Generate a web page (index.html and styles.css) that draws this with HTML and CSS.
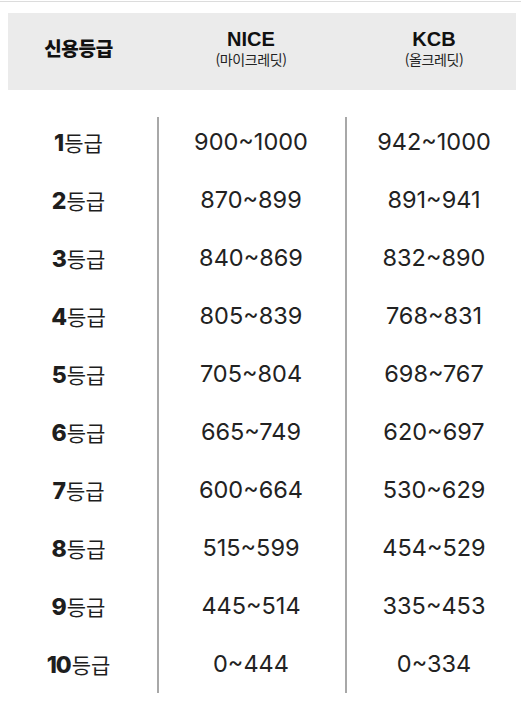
FILE: index.html
```html
<!DOCTYPE html>
<html lang="ko">
<head>
<meta charset="utf-8">
<title>신용등급표</title>
<link rel="stylesheet" href="styles.css">
</head>
<body>
<div class="topline"></div>
<div class="table">
  <div class="thead">
    <div class="th"><span class="th-ko">신용등급</span></div>
    <div class="th"><span class="th-en">NICE</span><span class="th-sub">(마이크레딧)</span></div>
    <div class="th"><span class="th-en">KCB</span><span class="th-sub">(올크레딧)</span></div>
  </div>
  <div class="tbody">
    <div class="row"><div class="grade"><b>1</b>등급</div><div class="num">900~1000</div><div class="num">942~1000</div></div>
    <div class="row"><div class="grade"><b>2</b>등급</div><div class="num">870~899</div><div class="num">891~941</div></div>
    <div class="row"><div class="grade"><b>3</b>등급</div><div class="num">840~869</div><div class="num">832~890</div></div>
    <div class="row"><div class="grade"><b>4</b>등급</div><div class="num">805~839</div><div class="num">768~831</div></div>
    <div class="row"><div class="grade"><b>5</b>등급</div><div class="num">705~804</div><div class="num">698~767</div></div>
    <div class="row"><div class="grade"><b>6</b>등급</div><div class="num">665~749</div><div class="num">620~697</div></div>
    <div class="row"><div class="grade"><b>7</b>등급</div><div class="num">600~664</div><div class="num">530~629</div></div>
    <div class="row"><div class="grade"><b>8</b>등급</div><div class="num">515~599</div><div class="num">454~529</div></div>
    <div class="row"><div class="grade"><b>9</b>등급</div><div class="num">445~514</div><div class="num">335~453</div></div>
    <div class="row"><div class="grade"><b>10</b>등급</div><div class="num">0~444</div><div class="num">0~334</div></div>
  </div>
</div>
</body>
</html>
```
FILE: styles.css
```css
html, body {
  margin: 0;
  padding: 0;
  background: #ffffff;
}
body {
  width: 521px;
  height: 712px;
  overflow: hidden;
  font-family: "Noto Sans CJK KR", "Noto Sans", sans-serif;
  color: #1e1e1e;
}
.topline {
  margin-top: 1px;
  height: 1px;
  background: #dcdcdc;
}
.table {
  width: 521px;
}
.thead {
  margin-top: 11px;
  height: 77px;
  box-sizing: border-box;
  padding-bottom: 8px;
  display: grid;
  grid-template-columns: 157px 188px 178px;
  align-items: center;
  background-image: linear-gradient(#ebebeb, #ebebeb);
  background-repeat: no-repeat;
  background-size: 508px 100%;
  background-position: 8px 0;
}
.th {
  display: flex;
  flex-direction: column;
  align-items: center;
  text-align: center;
}
.th-ko {
  font-family: "Noto Sans CJK KR", sans-serif;
  font-weight: 900;
  font-size: 19px;
  letter-spacing: -0.3px;
  color: #111;
}
.th-en {
  font-family: "Liberation Sans", Arial, sans-serif;
  font-weight: 700;
  font-size: 20px;
  line-height: 22px;
  color: #111;
}
.th-sub {
  font-family: "Noto Sans CJK KR", sans-serif;
  font-size: 14px;
  line-height: 18px;
  letter-spacing: -0.4px;
  color: #222;
}
.tbody {
  margin-top: 23px;
  background-image: linear-gradient(#a8a8a8, #a8a8a8), linear-gradient(#a8a8a8, #a8a8a8);
  background-repeat: no-repeat;
  background-size: 2px calc(100% - 4px), 2px calc(100% - 4px);
  background-position: 157px 4px, 345px 4px;
}
.row {
  height: 58px;
  display: grid;
  grid-template-columns: 157px 188px 178px;
  align-items: center;
}
.grade {
  text-align: center;
  font-family: "Noto Sans CJK KR", sans-serif;
  font-size: 21px;
  font-weight: 400;
  color: #1e1e1e;
  line-height: 28px;
}
.grade b {
  font-family: "Inter", "Noto Sans", sans-serif;
  font-weight: 800;
  font-size: 23px;
  letter-spacing: -1px;
  margin-right: 1px;
}
.num {
  text-align: center;
  font-family: "Inter", "Noto Sans", sans-serif;
  font-size: 23.5px;
  font-weight: 400;
  color: #222;
  line-height: 28px;
}
```
